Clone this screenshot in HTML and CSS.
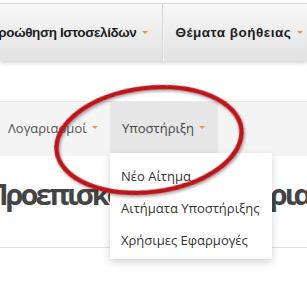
FILE: index.html
```html
<!DOCTYPE html>
<html lang="el">
<head>
<meta charset="utf-8">
<link rel="stylesheet" href="styles.css">
</head>
<body>
<div class="page">
  <nav class="topbar">
    <div class="top-item first">Προώθηση Ιστοσελίδων <span class="caret"></span></div>
    <div class="top-item second">Θέματα βοήθειας <span class="caret"></span></div>
  </nav>

  <nav class="subnav">
    <div class="sub-item">Λογαριασμοί <span class="caret"></span></div>
    <div class="sub-item active">Υποστήριξη <span class="caret"></span>
      <ul class="dropdown">
        <li>Νέο Αίτημα</li>
        <li>Αιτήματα Υποστήριξης</li>
        <li>Χρήσιμες Εφαρμογές</li>
      </ul>
    </div>
  </nav>

  <header class="heading">
    <h1>Προεπισκόπηση Λογαριασμού</h1>
  </header>

  <svg class="annotation" width="307" height="291" viewBox="0 0 307 291">
    <defs>
      <filter id="sh" x="-20%" y="-20%" width="140%" height="140%">
        <feDropShadow dx="1" dy="2" stdDeviation="1.5" flood-color="#000" flood-opacity="0.35"/>
      </filter>
    </defs>
    <ellipse cx="149" cy="140" rx="93" ry="52" transform="rotate(-7 149 140)" fill="none" stroke="#bb141b" stroke-width="4.5" filter="url(#sh)"/>
  </svg>
</div>
</body>
</html>
```

FILE: styles.css
```css
html, body {
  margin: 0;
  padding: 0;
  background: #fff;
}
.page {
  position: relative;
  width: 307px;
  height: 291px;
  overflow: hidden;
}
.topbar {
  margin-top: 3px;
  height: 57px;
  border-top: 1px solid #d9d9d9;
  background: linear-gradient(#f8f8f8, #e2e2e2);
  box-shadow: 0 2px 4px rgba(0,0,0,0.18);
  display: flex;
  align-items: center;
  white-space: nowrap;
  font-family: "Liberation Sans", Arial, sans-serif;
  font-weight: bold;
  font-size: 13.5px;
  color: #1e1e1e;
}
.top-item {
  height: 100%;
  display: flex;
  align-items: center;
  padding: 0 13px;
}
.top-item.first {
  margin-left: -11px;
  padding-left: 0;
  padding-right: 14px;
  letter-spacing: -0.4px;
  border-right: 1px solid #d6d6d6;
  box-shadow: 1px 0 0 #f6f6f6;
}
.top-item.second {
  padding-left: 12px;
  letter-spacing: 0.5px;
}
.caret {
  display: inline-block;
  width: 0;
  height: 0;
  border-left: 3.5px solid transparent;
  border-right: 3.5px solid transparent;
  border-top: 3.5px solid #d99a5b;
  margin-left: 6px;
}
.subnav {
  margin-top: 40px;
  height: 54px;
  border-top: 1px solid #e9e9e9;
  background: #f4f4f4;
  display: flex;
  align-items: flex-start;
  font-family: "Open Sans", sans-serif;
  font-size: 13px;
  color: #555;
  white-space: nowrap;
}
.sub-item {
  position: relative;
  height: 51px;
  display: flex;
  align-items: center;
  padding: 0 0 0 8px;
  width: 110px;
  box-sizing: border-box;
}
.sub-item .caret {
  margin-left: 5px;
}
.sub-item.active {
  background: #e6e6e6;
  padding: 0 0 0 12px;
  width: 108px;
  color: #444;
}
.dropdown {
  position: absolute;
  left: 0;
  top: 51px;
  width: 162px;
  margin: 0;
  padding: 8px 0 0;
  list-style: none;
  background: #fff;
  box-shadow: 0 3px 8px rgba(0,0,0,0.18);
  z-index: 2;
  height: 106px;
  box-sizing: border-box;
  font-size: 13px;
}
.dropdown li {
  padding: 0 11px;
  height: 32px;
  line-height: 30px;
  color: #333;
}
.heading {
  height: 92px;
  border-bottom: 1px solid #e2e2e2;
  box-sizing: border-box;
  white-space: nowrap;
}
.heading h1 {
  margin: 0 0 0 -13px;
  padding-top: 18px;
  font-family: "Open Sans", sans-serif;
  font-weight: bold;
  font-size: 29px;
  letter-spacing: -3px;
  word-spacing: 17px;
  line-height: 40px;
  color: #444;
}
.annotation {
  position: absolute;
  left: 0;
  top: 0;
  z-index: 3;
  pointer-events: none;
}
```
